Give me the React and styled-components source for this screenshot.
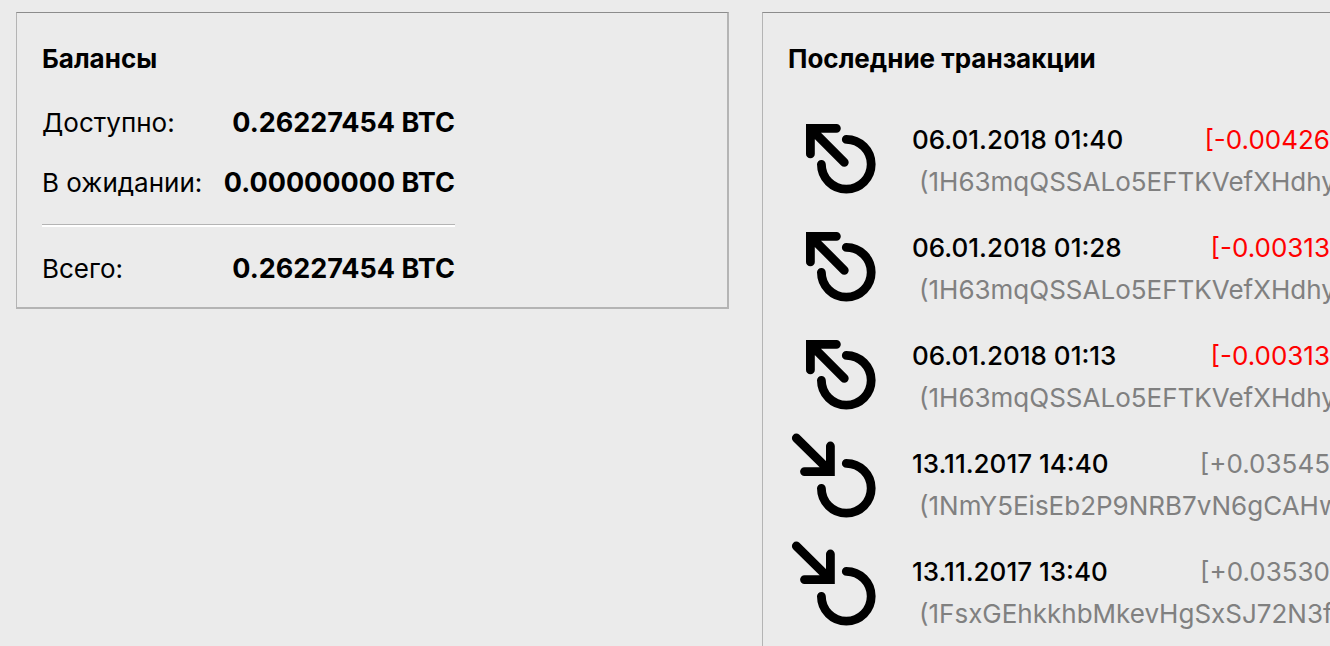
import React from 'react'
import styled, { createGlobalStyle } from 'styled-components'

const GlobalStyle = createGlobalStyle`
    body {
        margin: 0;
        background-color: #ebebeb;
        color: black;
        font-family: Inter, "Open Sans", sans-serif;
        font-size: 26px;
    }
`

const Overview = styled.main`
    display: grid;
    grid-template-columns: 713fr 568fr;
    align-items: start;
    gap: 33px;
    height: 100vh;
    padding: 12px 0 0 16px;
    box-sizing: border-box;
    overflow: hidden;
`

const Panel = styled.section`
    min-width: 0;
    box-sizing: border-box;
    padding: 26px ${props => (props.$cut ? 0 : 25)}px 8px 25px;
    border: 1px solid #b4b4b4;
    border-top-color: #8c8c8c;
    border-right-width: ${props => (props.$cut ? 0 : 2)}px;
    border-bottom-width: 2px;
    overflow: hidden;
`

const PanelTitle = styled.h2`
    margin: 0;
    font-size: 26px;
    font-weight: 700;
    line-height: 40px;
`

const Balances = styled.dl`
    display: flex;
    flex-direction: column;
    width: 413px;
    max-width: 100%;
    margin: 14px 0 0;
`

const BalanceRow = styled.div`
    display: flex;
    justify-content: space-between;
    line-height: 60px;
    white-space: nowrap;
`

const BalanceName = styled.dt`
    margin: 0;
`

const BalanceValue = styled.dd`
    margin: 0;
    font-size: 27px;
    font-weight: 700;
`

const TotalRow = styled(BalanceRow)`
    margin-top: 11px;
    padding-top: 14px;
    border-top: 1px solid #b4b4b4;
    box-shadow: inset 0 2px 0 white;
`

const Transactions = styled.ul`
    margin: 28px 0 0;
    padding: 0;
    list-style: none;
`

const TransactionRow = styled.li`
    display: flex;
    align-items: center;
    gap: 28px;
    height: 108px;
    white-space: nowrap;
`

const Icon = styled.svg`
    flex: none;
    width: 96px;
    height: 108px;
    fill: none;
    stroke: black;
    stroke-width: 8.8;
    stroke-linecap: round;
`

const Details = styled.div`
    flex: 1;
    min-width: 0;
    line-height: 42px;
`

const Summary = styled.div`
    display: flex;
    justify-content: space-between;
`

const DateTime = styled.time`
    font-weight: 500;
`

const Amount = styled.span`
    color: ${props => (props.$sent ? '#ff0000' : '#808080')};
`

const Address = styled.div`
    padding-left: 7px;
    color: #808080;
    overflow: hidden;
`

const balances = [
    { name: 'Доступно:', value: '0.26227454 BTC' },
    { name: 'В ожидании:', value: '0.00000000 BTC' },
]

const transactions = [
    { date: '06.01.2018 01:40', amount: '[-0.00426', address: '(1H63mqQSSALo5EFTKVefXHdhy', sent: true },
    { date: '06.01.2018 01:28', amount: '[-0.00313', address: '(1H63mqQSSALo5EFTKVefXHdhy', sent: true },
    { date: '06.01.2018 01:13', amount: '[-0.00313', address: '(1H63mqQSSALo5EFTKVefXHdhy', sent: true },
    { date: '13.11.2017 14:40', amount: '[+0.03545', address: '(1NmY5EisEb2P9NRB7vN6gCAHw', sent: false },
    { date: '13.11.2017 13:40', amount: '[+0.03530', address: '(1FsxGEhkkhbMkevHgSxSJ72N3fS', sent: false },
]

const TransactionIcon = (props) => (
    <Icon viewBox="0 0 96 108" aria-hidden="true">
        <path d="M58.3 32.4A24.9 24.9 0 1 1 33.4 57.3" />
        {props.sent
            ? <path d="M48.4 21.3H22.4V46.9M22.4 21.3L56.3 55.3" />
            : <path d="M42.4 15V40.6H16.5M8.3 7L42.4 40.6" />}
    </Icon>
)

const Transaction = (props) => (
    <TransactionRow>
        <TransactionIcon sent={props.tx.sent} />
        <Details>
            <Summary>
                <DateTime>{props.tx.date}</DateTime>
                <Amount $sent={props.tx.sent}>{props.tx.amount}</Amount>
            </Summary>
            <Address>{props.tx.address}</Address>
        </Details>
    </TransactionRow>
)

const App = () => (
    <>
        <GlobalStyle />
        <Overview>
            <Panel>
                <PanelTitle>Балансы</PanelTitle>
                <Balances>
                    {balances.map(row => (
                        <BalanceRow key={row.name}>
                            <BalanceName>{row.name}</BalanceName>
                            <BalanceValue>{row.value}</BalanceValue>
                        </BalanceRow>
                    ))}
                    <TotalRow>
                        <BalanceName>Всего:</BalanceName>
                        <BalanceValue>0.26227454 BTC</BalanceValue>
                    </TotalRow>
                </Balances>
            </Panel>
            <Panel $cut>
                <PanelTitle>Последние транзакции</PanelTitle>
                <Transactions>
                    {transactions.map(tx => <Transaction key={tx.date} tx={tx} />)}
                </Transactions>
            </Panel>
        </Overview>
    </>
)

export default App
